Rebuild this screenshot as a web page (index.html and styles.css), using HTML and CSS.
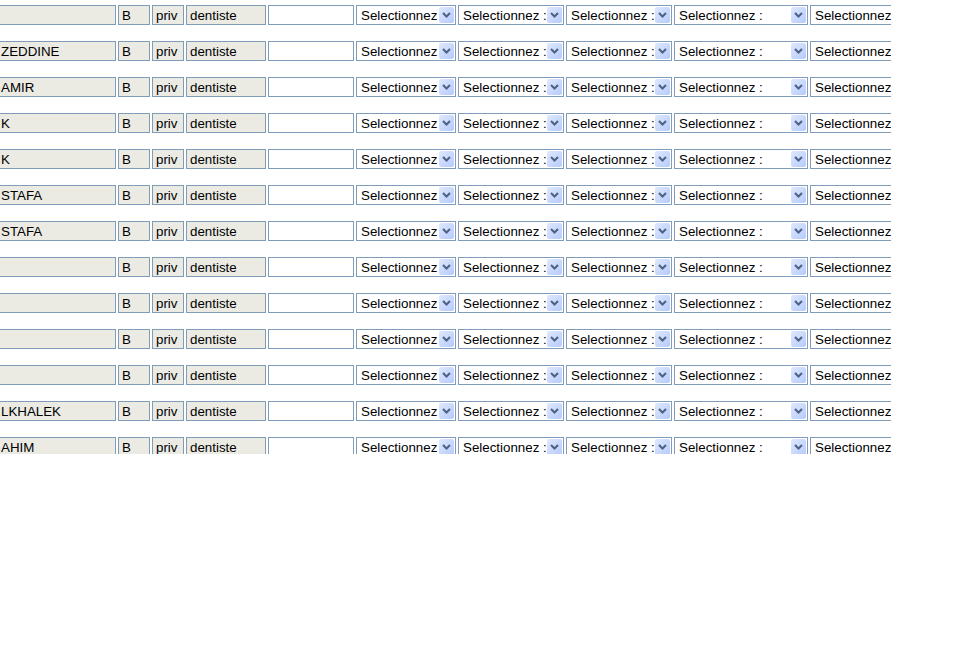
FILE: index.html
```html
<!DOCTYPE html>
<html lang="fr">
<head>
  <meta charset="UTF-8" />
  <title>Liste des praticiens</title>
  <link rel="stylesheet" href="styles.css">
</head>
<body>
  <div class="frame">
    <div class="list" id="list"></div>
  </div>

  <script>
    const names = ["", "ZEDDINE", "AMIR", "K", "K", "STAFA", "STAFA", "", "", "", "", "LKHALEK", "AHIM"];
    const combos = ["w1", "w2", "w3", "w4", "w5"];
    const chevron = '<svg width="9" height="6" viewBox="0 0 9 6"><path d="M1 1 L4.5 4.5 L8 1" fill="none" stroke="#4d6185" stroke-width="2"/></svg>';

    function field(cls, value, readonly) {
      return `<input class="fld ${cls}" type="text" value="${value}"${readonly ? " readonly" : ""} />`;
    }

    function combo(cls) {
      return `<div class="combo ${cls}"><span class="combo-txt">Selectionnez :</span><span class="combo-btn">${chevron}</span></div>`;
    }

    const list = document.getElementById("list");
    names.forEach(name => {
      let html = field("ro name", name, true)
        + field("ro cat", "B", true)
        + field("ro sec", "priv", true)
        + field("ro spec", "dentiste", true)
        + field("free", "", false);
      combos.forEach(c => { html += combo(c); });
      const row = document.createElement("div");
      row.className = "row";
      row.innerHTML = html;
      list.appendChild(row);
    });
  </script>
</body>
</html>
```

FILE: styles.css
```css
body { margin: 0; background: #fff; font-family: "Liberation Sans", Arial, sans-serif; font-size: 13.33px; color: #000; }
.frame { width: 891px; height: 454px; overflow: hidden; }
.list { display: flex; flex-direction: column; gap: 16px; padding-top: 5px; margin-left: -3px; }
.row { display: flex; gap: 2px; height: 20px; }

.fld { box-sizing: border-box; flex: none; height: 20px; margin: 0; padding: 0 3px; border: 1px solid #7f9db9; font: inherit; color: #000; background: #fff; outline: none; }
.fld.ro { background: #ebebe4; }
.name { width: 119px; }
.cat { width: 32px; }
.sec { width: 32px; }
.spec { width: 80px; }
.free { width: 86px; }

.combo { box-sizing: border-box; flex: none; display: flex; align-items: center; height: 20px; border: 1px solid #7f9db9; background: #fff; }
.combo-txt { flex: 1; align-self: stretch; min-width: 0; overflow: hidden; white-space: nowrap; padding: 2px 0 0 4px; line-height: 16px; }
.combo-btn { flex: none; display: flex; align-items: center; justify-content: center; width: 15px; height: 16px; margin: 0 1px; border-radius: 2px; background: linear-gradient(135deg, #dfe8fe, #b6cbfa); }
.w1 { width: 100px; }
.w2 { width: 106px; }
.w3 { width: 106px; }
.w4 { width: 134px; }
.w5 { width: 140px; }
```
